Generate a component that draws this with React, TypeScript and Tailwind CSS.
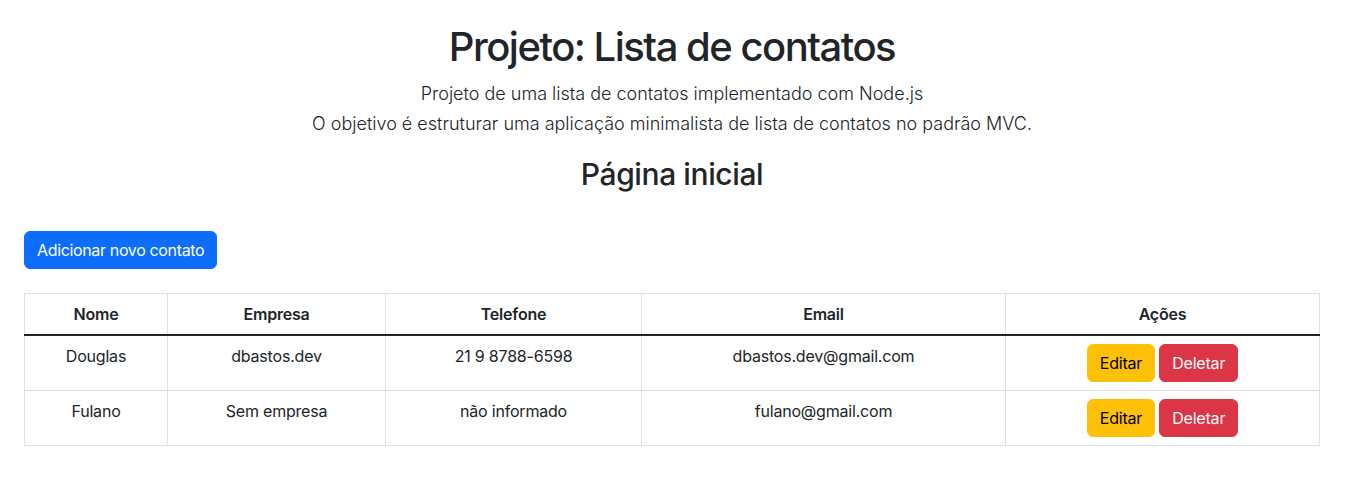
import React from "react";

const rows = [
  { nome: "Douglas", empresa: "dbastos.dev", tel: "21 9 8788-6598", email: "dbastos.dev@gmail.com" },
  { nome: "Fulano", empresa: "Sem empresa", tel: "não informado", email: "fulano@gmail.com" },
];

export default function App() {
  return (
    <div
      className="min-h-screen bg-white text-[#212529]"
      style={{ fontFamily: "Inter, 'Noto Sans', sans-serif" }}
    >
      <div className="pl-[24px] pr-[37px] pt-[23px]">
        <h1 className="text-center text-[40px] leading-[48px] font-medium mb-[8px] tracking-[-1.5px]">
          Projeto: Lista de contatos
        </h1>
        <p className="text-center text-[18px] leading-[30px] font-light">
          Projeto de uma lista de contatos implementado com Node.js
          <br />
          O objetivo é estruturar uma aplicação minimalista de lista de contatos no padrão MVC.
        </p>
        <h2 className="text-center text-[30px] leading-[38px] font-medium mt-[16px] tracking-[-0.4px]">
          Página inicial
        </h2>
        <div className="mt-[38px]">
          <button className="bg-[#0d6efd] text-white text-[16px] leading-[24px] px-[12px] py-[6px] rounded-[6px] border border-[#0d6efd] tracking-[-0.35px]">
            Adicionar novo contato
          </button>
        </div>
        <table className="w-full mt-[24px] border-collapse border border-[#dee2e6] text-[16px] leading-[24px] tracking-[-0.2px]">
          <thead>
            <tr>
              <th className="w-[143px] border border-[#dee2e6] border-b-2 border-b-[#212529] p-[8px] font-semibold text-center">Nome</th>
              <th className="w-[218px] border border-[#dee2e6] border-b-2 border-b-[#212529] p-[8px] font-semibold text-center">Empresa</th>
              <th className="w-[256px] border border-[#dee2e6] border-b-2 border-b-[#212529] p-[8px] font-semibold text-center">Telefone</th>
              <th className="w-[364px] border border-[#dee2e6] border-b-2 border-b-[#212529] p-[8px] font-semibold text-center">Email</th>
              <th className="border border-[#dee2e6] border-b-2 border-b-[#212529] p-[8px] font-semibold text-center">Ações</th>
            </tr>
          </thead>
          <tbody>
            {rows.map((r) => (
              <tr key={r.nome}>
                <td className="border border-[#dee2e6] p-[8px] text-center align-top">{r.nome}</td>
                <td className="border border-[#dee2e6] p-[8px] text-center align-top">{r.empresa}</td>
                <td className="border border-[#dee2e6] p-[8px] text-center align-top">{r.tel}</td>
                <td className="border border-[#dee2e6] p-[8px] text-center align-top">{r.email}</td>
                <td className="border border-[#dee2e6] p-[8px] text-center align-top">
                  <div className="flex justify-center gap-[4px]">
                    <button className="bg-[#ffc107] text-black px-[12px] py-[6px] rounded-[6px] leading-[24px] border border-[#ffc107]">
                      Editar
                    </button>
                    <button className="bg-[#dc3545] text-white px-[12px] py-[6px] rounded-[6px] leading-[24px] border border-[#dc3545]">
                      Deletar
                    </button>
                  </div>
                </td>
              </tr>
            ))}
          </tbody>
        </table>
      </div>
    </div>
  );
}
